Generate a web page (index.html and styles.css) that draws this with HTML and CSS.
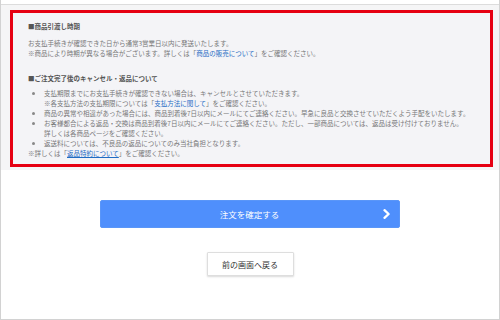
FILE: index.html
```html
<!DOCTYPE html>
<html lang="ja">
<head>
    <meta charset="UTF-8">
    <meta name="viewport" content="width=device-width, initial-scale=1.0">
    <title>注文確認</title>
    <link rel="stylesheet" href="styles.css">
</head>
<body>
    <div class="page">
        <div class="notice-area">
            <div class="notice">
                <h2 class="notice-title">■商品引渡し時期</h2>
                <p class="notice-text">お支払手続きが確認できた日から通常3営業日以内に発送いたします。<br>※商品により時期が異なる場合がございます。詳しくは「<a href="#">商品の販売について</a>」をご確認ください。</p>

                <h2 class="notice-title second">■ご注文完了後のキャンセル・返品について</h2>
                <ul class="notice-list">
                    <li>支払期限までにお支払手続きが確認できない場合は、キャンセルとさせていただきます。<br>※各支払方法の支払期限については「<a href="#">支払方法に関して</a>」をご確認ください。</li>
                    <li>商品の異常や相違があった場合には、商品到着後7日以内に<a href="#" class="plain">メール</a>にてご連絡ください。早急に良品と交換させていただくよう手配をいたします。</li>
                    <li>お客様都合による返品・交換は商品到着後7日以内に<a href="#" class="plain">メール</a>にてご連絡ください。ただし、一部商品については、返品は受け付けておりません。<br>詳しくは各商品ページをご確認ください。</li>
                    <li>返送料については、不良品の返品についてのみ当社負担となります。</li>
                </ul>
                <p class="notice-text">※詳しくは「<a href="#" class="underline">返品特約について</a>」をご確認ください。</p>
            </div>
        </div>

        <div class="actions">
            <button class="btn-confirm">
                <span></span>
                <span class="btn-label">注文を確定する</span>
                <svg class="chevron" width="8" height="10" viewBox="0 0 8 10">
                    <polyline points="1.5,1.2 5.6,5 1.5,8.8" fill="none" stroke="#fff" stroke-width="2.3" stroke-linecap="round" stroke-linejoin="round"/>
                </svg>
            </button>
            <button class="btn-back">前の画面へ戻る</button>
        </div>
    </div>
</body>
</html>
```

FILE: styles.css
```css
body {
    margin: 0;
    padding: 0;
    background-color: #fff;
    font-family: "Noto Sans CJK JP", "Noto Sans", sans-serif;
}

.page {
    box-sizing: border-box;
    width: 500px;
    height: 320px;
    padding-top: 4px;
    border: 1px solid #d2d2d2;
    border-top: 0;
}

.notice-area {
    padding: 5px 6px 3px 9px;
    background-color: #f5f5f6;
    border-top: 1px solid #dcdcdc;
}

.notice {
    padding: 8px 10px 6px 15px;
    background-color: #f4f4f7;
    border: 3px solid #e60012;
    font-size: 6.5px;
    line-height: 10px;
    color: #777;
}

.notice-title {
    margin: 0 0 7px;
    font-size: 6.5px;
    line-height: 10px;
    font-weight: bold;
    color: #555;
}

.notice-title.second {
    margin-top: 15px;
    margin-bottom: 5px;
}

.notice-text {
    margin: 0;
    white-space: nowrap;
}

.notice a {
    color: #1f6cc4;
    text-decoration: none;
}

.notice a.plain {
    color: #777;
}

.notice a.underline {
    text-decoration: underline;
}

.notice-list {
    margin: 0;
    padding-left: 16px;
    white-space: nowrap;
}

.notice-list li::marker {
    color: #888;
}

.actions {
    display: flex;
    flex-direction: column;
    align-items: center;
    gap: 24px;
    padding-top: 30px;
}

.btn-confirm {
    display: grid;
    grid-template-columns: 1fr auto 1fr;
    align-items: center;
    box-sizing: border-box;
    width: 300px;
    height: 28px;
    padding: 0 8px;
    margin-left: -1px;
    background-color: #4f8ffc;
    border: 1px solid #5a96f8;
    border-radius: 2px;
    color: #fff;
    font-family: inherit;
    font-size: 8.5px;
    cursor: pointer;
}

.chevron {
    justify-self: end;
}

.btn-back {
    box-sizing: border-box;
    width: 87px;
    height: 24px;
    padding: 0;
    background-color: #fff;
    border: 1px solid #dedede;
    border-radius: 1px;
    box-shadow: 0 1px 2px rgba(0, 0, 0, 0.15);
    color: #333;
    font-family: inherit;
    font-size: 8px;
    cursor: pointer;
}
```
